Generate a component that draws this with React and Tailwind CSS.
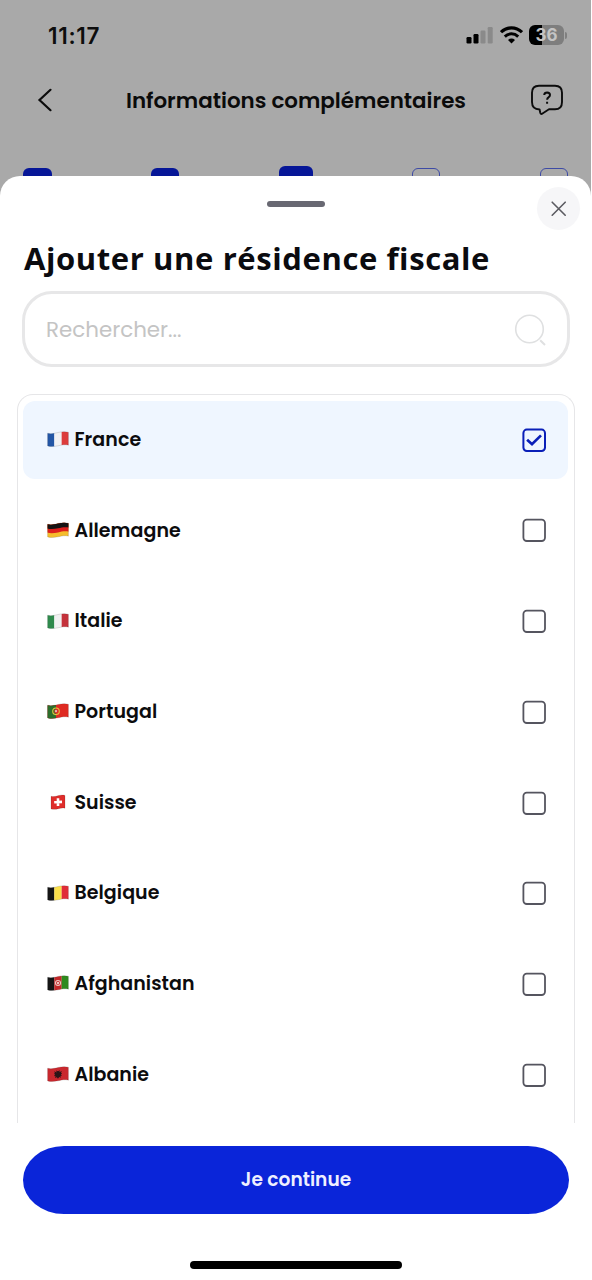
import { useState } from "react";

const WAVE = "M.6 2.2C4 3.2 7 2.4 11 1.5S18 .2 21.4 1.3V14.2C18 13.2 15 14 11 14.8S4 15.9 .6 14.9Z";
const SQUARE_WAVE = "M4 2.3C7 2.9 9 2.3 11.5 1.6S16 .9 18 1.4V14.2C16 13.7 14 14 11.5 14.7S7 15.6 4 14.9Z";

const countries = [
  { code: "fr", name: "France" },
  { code: "de", name: "Allemagne" },
  { code: "it", name: "Italie" },
  { code: "pt", name: "Portugal" },
  { code: "ch", name: "Suisse" },
  { code: "be", name: "Belgique" },
  { code: "af", name: "Afghanistan" },
  { code: "al", name: "Albanie" },
];

function Stripes({ colors }) {
  return colors.map((c, i) => <rect key={i} x={i * 7.33} width="7.4" height="16" fill={c} />);
}

function FlagArt({ code }) {
  switch (code) {
    case "fr":
      return <Stripes colors={["#2356a5", "#f1f1f3", "#dc3c3c"]} />;
    case "it":
      return <Stripes colors={["#2f8a4c", "#f1f1f1", "#c4323b"]} />;
    case "be":
      return <Stripes colors={["#151515", "#fbe04b", "#e02d38"]} />;
    case "de":
      return (
        <>
          <rect width="22" height="16" fill="#f5bd2c" />
          <path d="M0 0H22V9.8C18 8.8 15 9.6 11 10.4S4 11.6 0 10.6Z" fill="#dd1f1c" />
          <path d="M0 0H22V5.6C18 4.6 15 5.4 11 6.2S4 7.2 0 6.4Z" fill="#151313" />
        </>
      );
    case "pt":
      return (
        <>
          <rect width="22" height="16" fill="#df2a22" />
          <rect width="9" height="16" fill="#2c6e2b" />
          <circle cx="9" cy="8.3" r="3.3" fill="none" stroke="#e3c53c" strokeWidth="1.1" />
          <rect x="7.4" y="6.3" width="3.2" height="3.9" rx="1" fill="#d8332b" />
          <rect x="8.3" y="7.1" width="1.4" height="2" fill="#f4e9e4" />
        </>
      );
    case "ch":
      return (
        <>
          <rect width="22" height="16" fill="#df2d2b" />
          <path d="M11 4.2V12M7.2 8.2L15 7.9" stroke="#fff" strokeWidth="2.6" />
        </>
      );
    case "af":
      return (
        <>
          <Stripes colors={["#151515", "#c3292a", "#2f8a1f"]} />
          <circle cx="11" cy="8" r="2.5" fill="none" stroke="#eec5c0" strokeWidth="1.1" />
          <rect x="10" y="7" width="2" height="2.2" fill="#eec5c0" />
        </>
      );
    default:
      return (
        <>
          <rect width="22" height="16" fill="#c9282e" />
          <path
            d="M11 12.8L9.8 11.2L8 12L8.6 10.2L7 10L8.1 8.8L6.8 7.4L8 7.3L7.2 5.2L9.6 6.5L9.2 4.4L11 5.2L12.8 4.2L12.4 6.2L14.8 4.9L14 7.1L15.2 7.2L13.9 8.6L15 9.6L13.4 9.9L14 11.7L12.2 11.1Z"
            fill="#2b1517"
          />
        </>
      );
  }
}

function Flag({ code }) {
  const shape = code === "ch" ? SQUARE_WAVE : WAVE;
  return (
    <svg className="mb-[1px] h-4 w-[22px] shrink-0" viewBox="0 0 22 16">
      <clipPath id={`flag-${code}`}>
        <path d={shape} />
      </clipPath>
      <g clipPath={`url(#flag-${code})`}>
        <FlagArt code={code} />
      </g>
      <path d={shape} fill="none" stroke="#000" strokeOpacity="0.18" strokeWidth="0.7" />
    </svg>
  );
}

function Checkbox({ checked }) {
  return (
    <svg className="h-6 w-6 shrink-0" viewBox="0 0 24 24" fill="none">
      <rect
        x="1.4"
        y="1.6"
        width="21.6"
        height="21.4"
        rx="3.4"
        stroke={checked ? "#0a1fb8" : "#55555f"}
        strokeWidth={checked ? 2 : 1.8}
      />
      {checked && <path d="M5.1 11.7L10 16.2L19 7.4" stroke="#0a1fb8" strokeWidth="2.7" />}
    </svg>
  );
}

function StatusBar() {
  return (
    <div className="flex h-[70px] items-center justify-between pl-[48px] pr-[24px] font-['Inter',sans-serif]">
      <span className="pt-px text-[22.5px] font-semibold tracking-[0.7px] text-[#0d0d0d]">11:17</span>
      <div className="flex items-center gap-[6px]">
        <svg className="h-[18px] w-[28px]" viewBox="0 0 28 18">
          <rect x="0.5" y="11" width="5" height="6.5" rx="1.2" fill="#000" />
          <rect x="7.5" y="8" width="5" height="9.5" rx="1.2" fill="#000" />
          <rect x="14.5" y="4.5" width="5" height="13" rx="1.2" fill="#8a8a8a" />
          <rect x="21.7" y="1" width="5" height="16.5" rx="1.2" fill="#8a8a8a" />
        </svg>
        <svg className="h-[18px] w-[23px]" viewBox="0 0 23 18" fill="none" stroke="#000">
          <path d="M1 6.2C7 .4 16 .4 22 6.2" strokeWidth="3.2" />
          <path d="M4.8 10.6C8.8 6.9 14.2 6.9 18.2 10.6" strokeWidth="3" />
          <path d="M11.5 17.6L8 14C10.2 12.1 12.8 12.1 15 14Z" fill="#000" stroke="none" />
        </svg>
        <div className="flex items-center gap-px">
          <div className="flex h-5 w-[35px] items-center justify-center rounded-[6px] bg-linear-to-r from-black from-36% to-[#7e7e7e] to-36% text-[17px] font-bold leading-none text-[#c4c4c4]">
            36
          </div>
          <div className="h-[7px] w-[2px] rounded-r-full bg-[#808080]" />
        </div>
      </div>
    </div>
  );
}

function Header() {
  return (
    <div className="flex h-[60px] items-center justify-between pl-[37px] pr-[27px]">
      <svg className="h-6 w-4" viewBox="0 0 16 24" fill="none" stroke="#0c0c0c" strokeWidth="2.2" strokeLinecap="round">
        <path d="M13.5 1.8L2.5 12L13.5 22.2" />
      </svg>
      <h1 className="ml-[9px] whitespace-nowrap pt-[3px] text-[21.4px] font-semibold text-[#0b0b0b]">Informations complémentaires</h1>
      <svg className="h-8 w-[34px]" viewBox="0 0 34 32" fill="none" stroke="#0c0c0c" strokeWidth="1.9" strokeLinejoin="round">
        <path d="M9 1.8H25Q32 1.8 32 8.8V18Q32 25.3 25 25.3H19L12.5 29.5Q10.7 30.7 10.2 28.5L9.6 25.5Q2 25.3 2 18V8.8Q2 1.8 9 1.8Z" />
        <path d="M14.2 11Q14.5 8.6 17.1 8.6Q20 8.8 20 11.1Q20 12.5 18.5 13.4Q17.2 14.2 17.1 15.8M17.1 17.8V19.7" strokeWidth="2" />
      </svg>
    </div>
  );
}

function Steps() {
  return (
    <div className="flex h-[46px] items-start justify-between overflow-hidden px-[23px] pt-[36px]">
      <div className="mt-[2px] h-7 w-[28.5px] shrink-0 rounded-[6px] bg-[#061697]" />
      <div className="mt-[2px] h-7 w-[28.5px] shrink-0 rounded-[6px] bg-[#061697]" />
      <div className="h-8 w-[34px] shrink-0 rounded-[6px] bg-[#061697]" />
      <div className="mt-[2px] h-7 w-[28.5px] shrink-0 rounded-[6px] border border-[#3e4ba5]" />
      <div className="mt-[2px] h-7 w-[28.5px] shrink-0 rounded-[6px] border border-[#3e4ba5]" />
    </div>
  );
}

export default function App() {
  const [selected, setSelected] = useState("fr");

  return (
    <div className="h-[1280px] w-[592px] overflow-hidden bg-white font-['Poppins','Inter',sans-serif]">
      <div className="w-[591px] bg-[#a9a9a9]">
        <StatusBar />
        <Header />
        <Steps />

        <div className="relative flex h-[1104px] flex-col rounded-t-[20px] bg-white">
          <div className="mx-auto mt-[25px] h-[6px] w-[58px] shrink-0 rounded-full bg-[#686872]" />
          <button className="absolute right-[11px] top-[11px] flex h-[43px] w-[43px] items-center justify-center rounded-full bg-[#f6f6f8]">
            <svg className="h-4 w-4" viewBox="0 0 16 16" stroke="#5b5b61" strokeWidth="1.6" strokeLinecap="round">
              <path d="M1.2 1.2L14.2 14.2M14.2 1.2L1.2 14.2" />
            </svg>
          </button>

          <h2 className="mt-[29px] h-[44px] shrink-0 whitespace-nowrap pl-[24px] font-['Open_Sans',sans-serif] text-[31px] font-bold leading-[44px] tracking-[0.6px] text-[#0b0b0f]">
            Ajouter une résidence fiscale
          </h2>

          <div className="ml-[22px] mr-[21px] mt-[11px] flex h-[76px] shrink-0 items-center justify-between rounded-[30px] border-[3px] border-[#e7e7e8] pl-[21px] pr-[21px]">
            <input
              className="w-[300px] pt-[2px] text-[21.4px] outline-none placeholder:text-[#c4c4c4]"
              placeholder="Rechercher..."
            />
            <svg className="mt-px h-8 w-8" viewBox="0 0 32 32" fill="none" stroke="#dfe0e1">
              <circle cx="15.5" cy="15" r="13.8" strokeWidth="1.6" />
              <path d="M26.2 26.3L31 31" strokeWidth="2" />
            </svg>
          </div>

          <div className="mx-[17px] mt-[27px] flex h-[729px] w-[558px] shrink-0 flex-col gap-[13.2px] overflow-hidden rounded-t-[16px] border-x-[1.5px] border-t-[1.5px] border-[#e6e6e8] px-[5px] pt-[6px]">
            {countries.map((c) => (
              <div
                key={c.code}
                onClick={() => setSelected(c.code)}
                className={`mr-px flex h-[77.5px] shrink-0 items-center rounded-[12px] pl-[24px] pr-[22px] ${
                  selected === c.code ? "bg-[#eff6ff]" : ""
                }`}
              >
                <Flag code={c.code} />
                <span className="ml-[5.5px] flex-1 pt-px text-[19px] font-semibold tracking-[0.05px] text-[#0c0c0e]">{c.name}</span>
                <Checkbox checked={selected === c.code} />
              </div>
            ))}
          </div>

          <button className="mx-[23px] mt-[23px] h-[68px] w-[546px] shrink-0 rounded-[41px/34px] bg-[#0a25d9] text-[18.6px] font-semibold text-[#eef0ff]">
            Je continue
          </button>
          <div className="mx-auto mt-[47px] h-[8px] w-[212px] shrink-0 rounded-full bg-black" />
        </div>
      </div>
    </div>
  );
}
